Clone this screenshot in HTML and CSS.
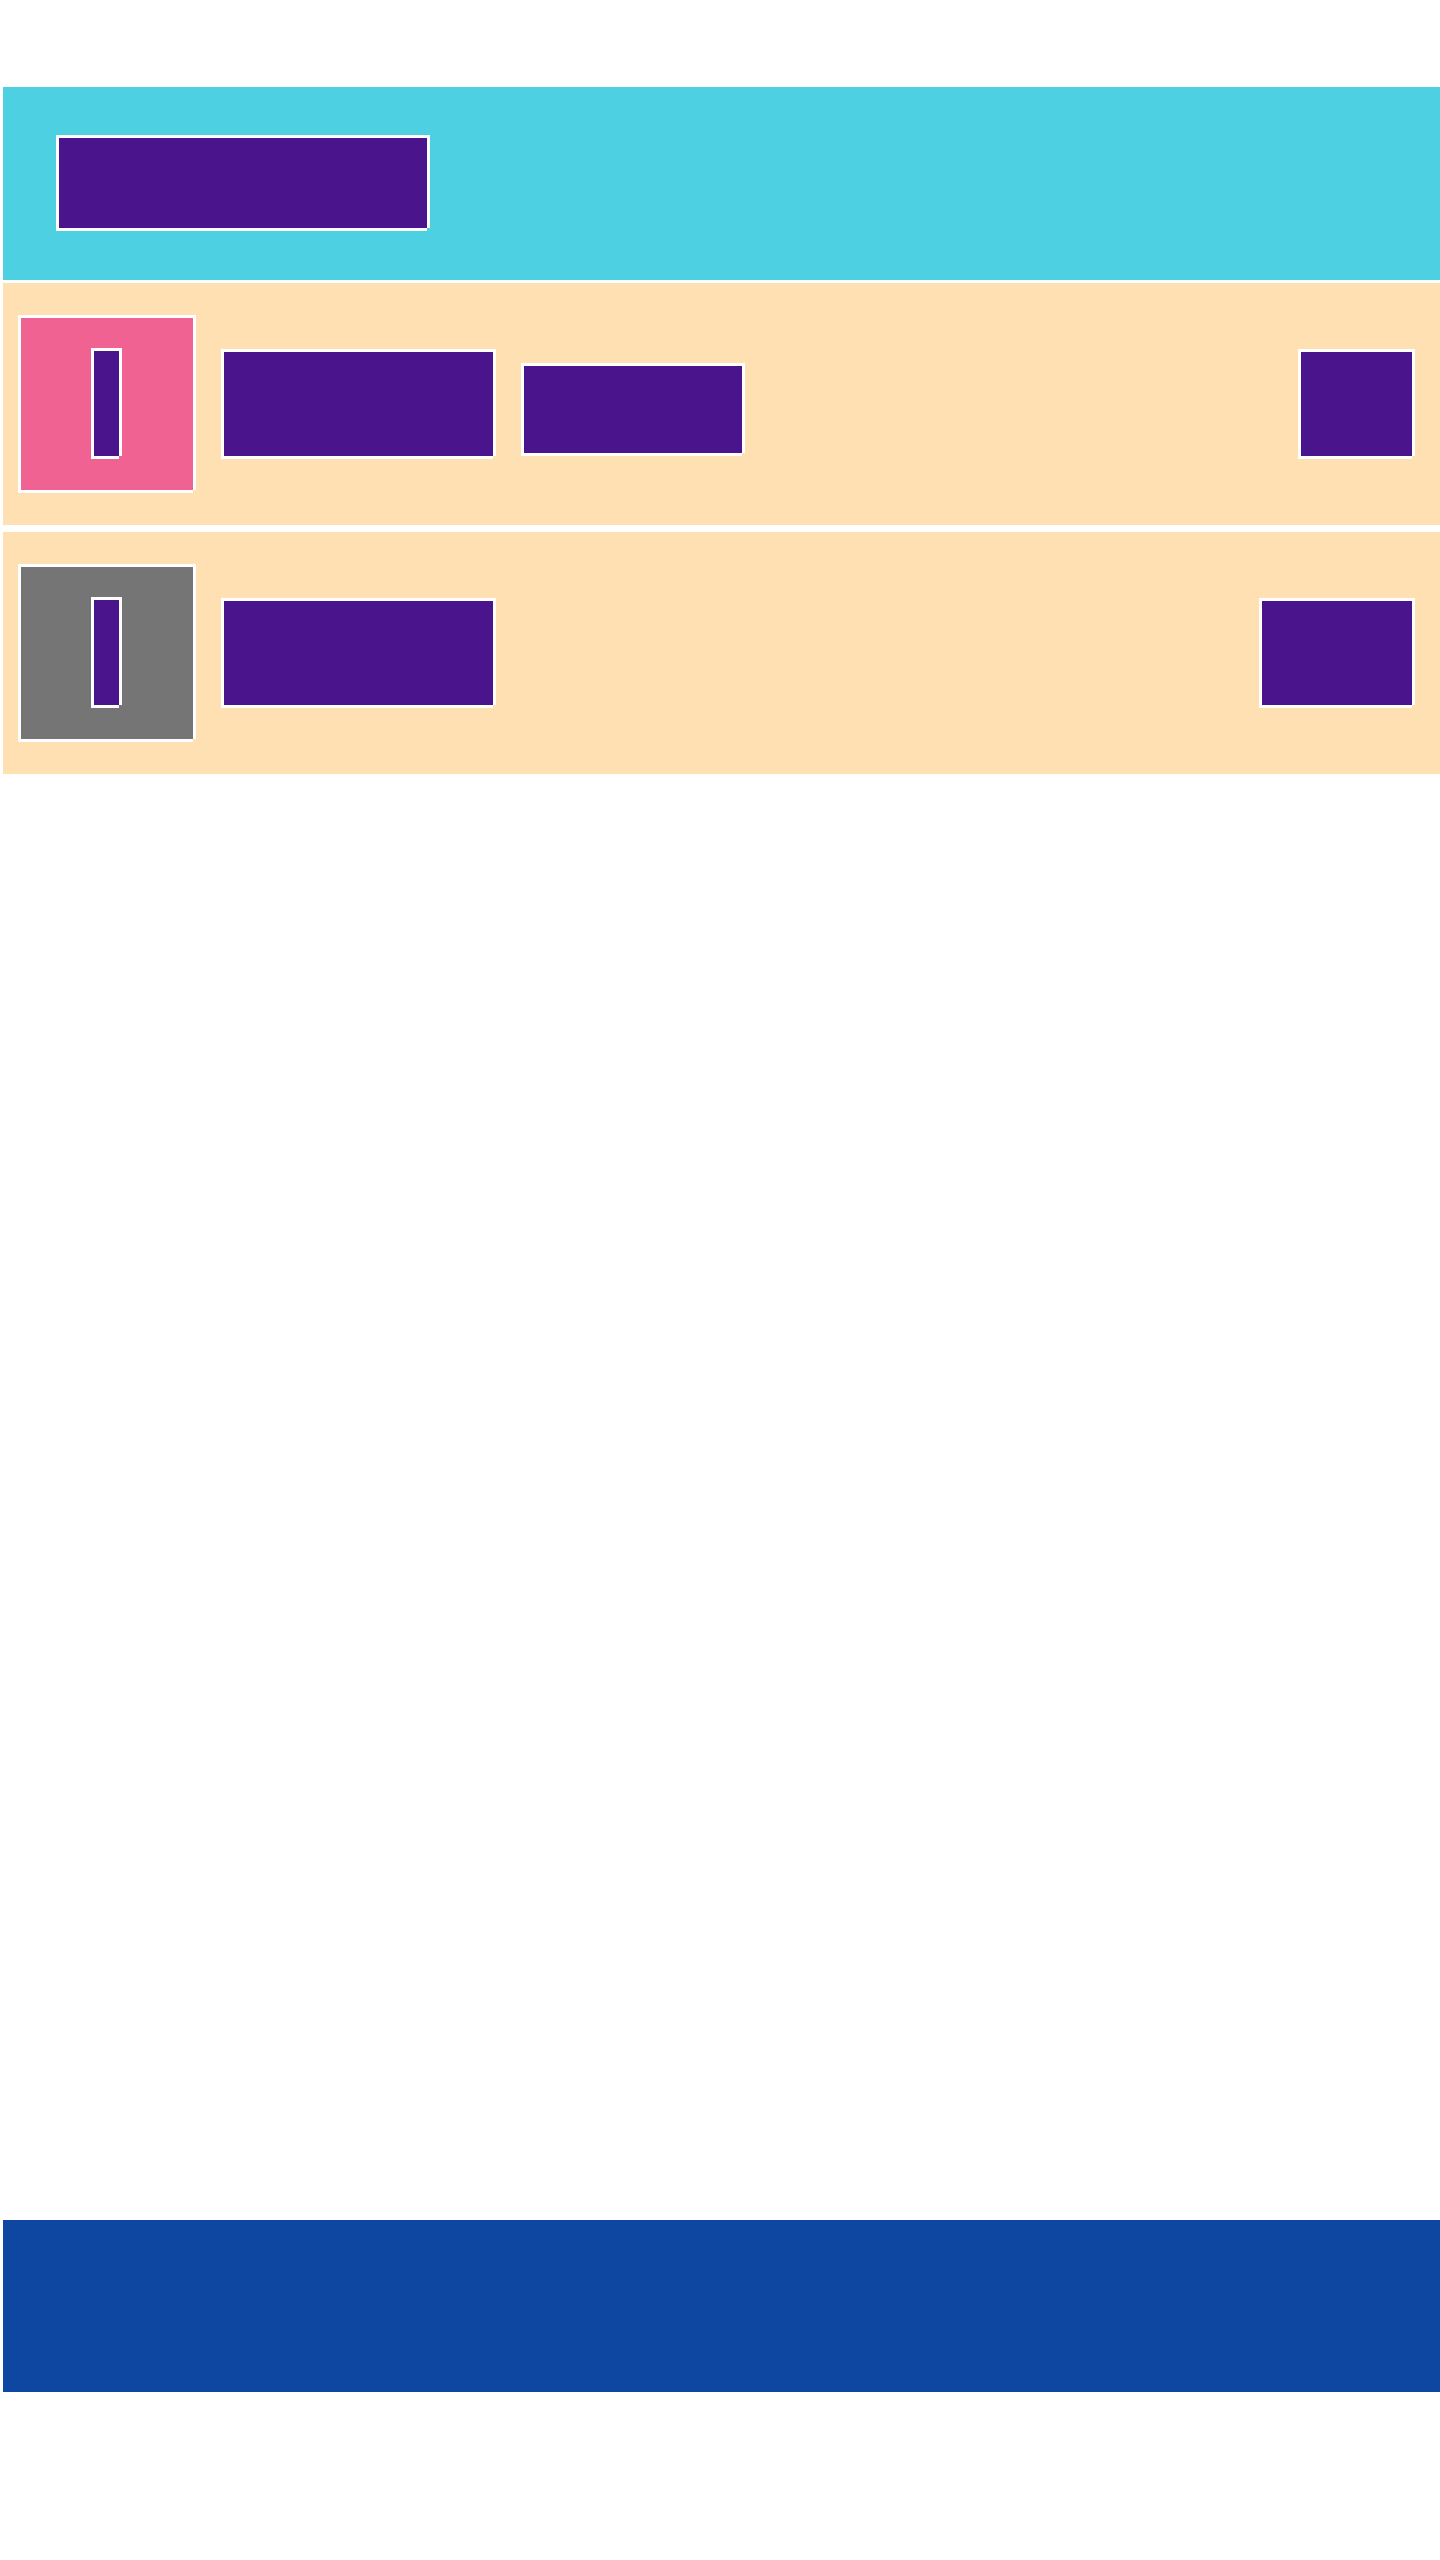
FILE: index.html
```html
<!DOCTYPE html>
<html lang="en">
<head>
<meta charset="utf-8">
<title>List</title>
<link rel="stylesheet" href="styles.css">
</head>
<body>
<div class="page">
  <header class="header">
    <div class="blk header-title"></div>
  </header>
  <div class="row row-first">
    <div class="blk icon icon-pink"><div class="blk bar"></div></div>
    <div class="blk label"></div>
    <div class="blk tag"></div>
    <div class="blk action action-small"></div>
  </div>
  <div class="row row-second">
    <div class="blk icon icon-gray"><div class="blk bar"></div></div>
    <div class="blk label"></div>
    <div class="blk action action-wide"></div>
  </div>
  <footer class="footer"></footer>
</div>
</body>
</html>
```

FILE: styles.css
```css
html, body {
  margin: 0;
  padding: 0;
  background: #ffffff;
}

.page {
  padding: 87px 0 0 3px;
  font-family: "Liberation Sans", Arial, sans-serif;
}

.blk {
  box-sizing: border-box;
  background: #4a148c;
  border-top: 3px solid #ffffff;
  border-left: 3px solid #ffffff;
  box-shadow: 3px 0 0 #ffffff, 0 3px 0 #ffffff;
  flex: none;
}

.header {
  height: 193px;
  background: #4dd0e1;
  box-sizing: border-box;
  padding: 48px 0 0 53px;
}

.header-title {
  width: 371px;
  height: 93px;
}

.row {
  display: flex;
  align-items: flex-start;
  height: 242px;
  box-sizing: border-box;
  padding: 32px 28px 35px 15px;
  background: #ffe0b2;
}

.row-first {
  margin-top: 3px;
}

.row-second {
  margin-top: 7px;
}

.icon {
  width: 175px;
  height: 175px;
  display: flex;
  align-items: flex-start;
}

.icon-pink {
  background: #f06292;
}

.icon-gray {
  background: #757575;
}

.bar {
  width: 28px;
  height: 108px;
  margin: 30px 0 0 70px;
}

.label {
  width: 272px;
  height: 107px;
  margin: 34px 0 0 28px;
}

.tag {
  width: 221px;
  height: 90px;
  margin: 48px 0 0 28px;
}

.action {
  height: 107px;
  margin: 34px 0 0 auto;
}

.action-small {
  width: 114px;
}

.action-wide {
  width: 153px;
}

.footer {
  margin-top: 1446px;
  height: 172px;
  background: #0d47a1;
}
```
